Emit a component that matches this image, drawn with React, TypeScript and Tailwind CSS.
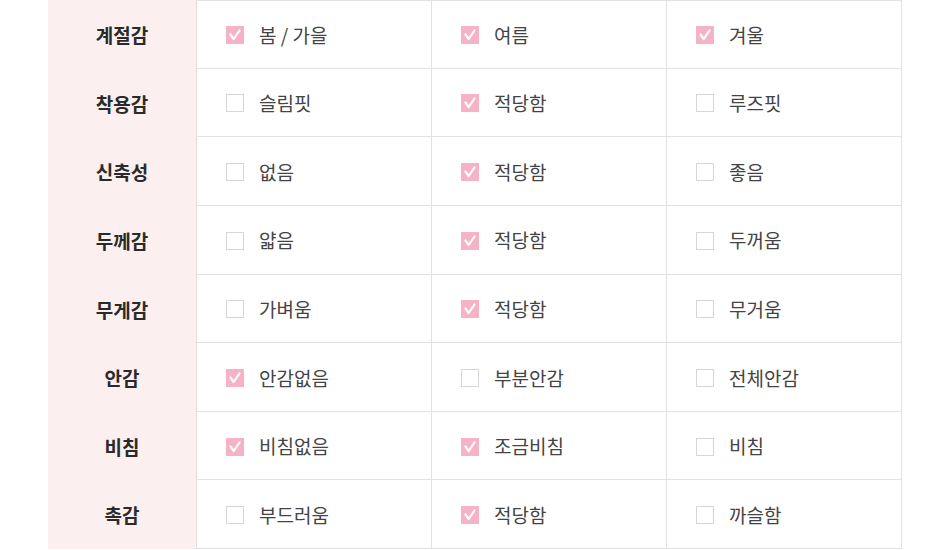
import React from "react";

interface Option {
    label: string;
    checked: boolean;
}

interface Row {
    name: string;
    options: Option[];
}

const rows: Row[] = [
    { name: "계절감", options: [{ label: "봄 / 가을", checked: true }, { label: "여름", checked: true }, { label: "겨울", checked: true }] },
    { name: "착용감", options: [{ label: "슬림핏", checked: false }, { label: "적당함", checked: true }, { label: "루즈핏", checked: false }] },
    { name: "신축성", options: [{ label: "없음", checked: false }, { label: "적당함", checked: true }, { label: "좋음", checked: false }] },
    { name: "두께감", options: [{ label: "얇음", checked: false }, { label: "적당함", checked: true }, { label: "두꺼움", checked: false }] },
    { name: "무게감", options: [{ label: "가벼움", checked: false }, { label: "적당함", checked: true }, { label: "무거움", checked: false }] },
    { name: "안감", options: [{ label: "안감없음", checked: true }, { label: "부분안감", checked: false }, { label: "전체안감", checked: false }] },
    { name: "비침", options: [{ label: "비침없음", checked: true }, { label: "조금비침", checked: true }, { label: "비침", checked: false }] },
    { name: "촉감", options: [{ label: "부드러움", checked: false }, { label: "적당함", checked: true }, { label: "까슬함", checked: false }] },
];

const CheckBox = ({ checked }: { checked: boolean }) => {
    if (checked) {
        return (
            <span className="flex items-center justify-center w-[18px] h-[18px] bg-[#f6b3c5] shrink-0">
                <svg className="w-[14px] h-[14px]" viewBox="0 0 14 14" fill="none">
                    <path d="M2.5 6.5l3.2 4.5L11.5 2.5" stroke="#fff" strokeWidth="2.2" strokeLinecap="round" strokeLinejoin="round" />
                </svg>
            </span>
        );
    }
    return <span className="w-[18px] h-[18px] border border-[#d6d6d6] bg-white shrink-0" />;
};

export default function App() {
    return (
        <div
            className="w-[950px] h-[550px] bg-white overflow-hidden"
            style={{ fontFamily: '"Noto Sans CJK KR", "Noto Sans", sans-serif' }}
        >
            <div className="ml-[48px] w-[854px]">
                {rows.map((row, index) => (
                    <div key={index} className="grid grid-cols-[149px_235px_235px_235px] h-[68.625px]">
                        <div className="flex items-center justify-center pt-[2px] bg-[#fcefef] border-r border-[#e4dcdc] text-[19px] font-bold text-[#2a2a2a]">
                            {row.name}
                        </div>
                        {row.options.map((option, i) => (
                            <div
                                key={i}
                                className={
                                    "flex items-center pl-[29px] pt-[2px] gap-[15px] border-b border-r border-[#e2e2e2] " +
                                    (index === 0 ? "border-t" : "")
                                }
                            >
                                <CheckBox checked={option.checked} />
                                <span className="text-[19px] text-[#444]">{option.label}</span>
                            </div>
                        ))}
                    </div>
                ))}
            </div>
        </div>
    );
}
